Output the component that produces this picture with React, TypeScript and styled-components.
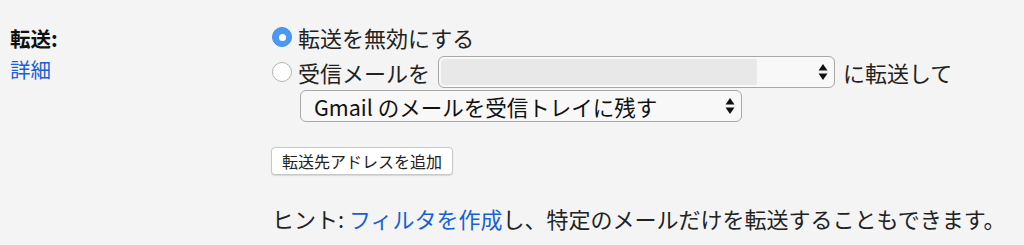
import React from 'react';
import styled, { createGlobalStyle } from 'styled-components';

const GlobalStyle = createGlobalStyle`
  html, body {
    margin: 0;
    padding: 0;
    background: #f4f4f4;
  }
  body {
    font-family: 'Noto Sans CJK JP', 'Liberation Sans', sans-serif;
    color: #222;
  }
`;

const Arrows: React.FC = () => (
  <svg width="10" height="18" viewBox="0 0 10 18">
    <path d="M5 1 L9.5 7.5 L0.5 7.5 Z" fill="#111" />
    <path d="M5 17 L9.5 10.5 L0.5 10.5 Z" fill="#111" />
  </svg>
);

const App: React.FC = () => {
  return (
    <>
      <GlobalStyle />
      <Page>
        <LabelColumn>
          <Title>転送:</Title>
          <Link href="#">詳細</Link>
        </LabelColumn>
        <Content>
          <RadioRow>
            <Radio checked />
            <Text>転送を無効にする</Text>
          </RadioRow>
          <RadioRow>
            <Radio />
            <Text>受信メールを</Text>
            <Select width={397}>
              <Masked />
              <ArrowBox>
                <Arrows />
              </ArrowBox>
            </Select>
            <Text>に転送して</Text>
          </RadioRow>
          <Indented>
            <Select width={442}>
              <SelectLabel>Gmail のメールを受信トレイに残す</SelectLabel>
              <ArrowBox>
                <Arrows />
              </ArrowBox>
            </Select>
          </Indented>
          <Button type="button">転送先アドレスを追加</Button>
          <Hint>
            ヒント: <Link href="#">フィルタを作成</Link>し、特定のメールだけを転送することもできます。
          </Hint>
        </Content>
      </Page>
    </>
  );
};

export default App;

const Page = styled.div`
  display: flex;
  padding: 24px 0 0 10px;
  height: 245px;
  box-sizing: border-box;
`;

const LabelColumn = styled.div`
  width: 262px;
  display: flex;
  flex-direction: column;
  gap: 3px;
  font-size: 20.5px;
  line-height: 28px;
`;

const Title = styled.div`
  font-weight: bold;
  color: #111;
`;

const Link = styled.a`
  color: #1a5fd6;
  text-decoration: none;
`;

const Content = styled.div`
  display: flex;
  flex-direction: column;
  align-items: flex-start;
  font-size: 22px;
`;

const RadioRow = styled.div`
  display: flex;
  align-items: center;
  height: 34px;
  gap: 8px;
  margin-top: 1px;
  &:first-child {
    height: 26px;
    margin: 0 0 4px;
  }
`;

const Radio = styled.span<{ checked?: boolean }>`
  width: 20px;
  height: 20px;
  border-radius: 50%;
  box-sizing: border-box;
  flex-shrink: 0;
  margin-right: -2px;
  position: relative;
  background: ${(p) => (p.checked ? '#4a98f4' : '#fff')};
  border: 1px solid ${(p) => (p.checked ? '#3d8ef0' : '#b3b3b3')};
  &::after {
    content: '';
    display: ${(p) => (p.checked ? 'block' : 'none')};
    position: absolute;
    left: 50%;
    top: 50%;
    width: 7px;
    height: 7px;
    margin: -3.5px 0 0 -3.5px;
    border-radius: 50%;
    background: #fff;
  }
`;

const Text = styled.span`
  line-height: 26px;
  color: #222;
  white-space: nowrap;
`;

const Select = styled.div<{ width: number }>`
  width: ${(p) => p.width}px;
  height: 32px;
  box-sizing: border-box;
  border: 1px solid #a8a8a8;
  border-radius: 6px;
  background: #f8f8f8;
  display: flex;
  align-items: center;
  padding: 2px 6px 2px 2px;
  gap: 8px;
`;

const Masked = styled.div`
  width: 316px;
  align-self: stretch;
  background: #e8e8e8;
  border-radius: 4px 0 0 4px;
`;

const SelectLabel = styled.span`
  flex: 1;
  padding-left: 11px;
  font-size: 21.5px;
  color: #111;
  white-space: nowrap;
`;

const ArrowBox = styled.span`
  margin-left: auto;
  display: flex;
  align-items: center;
`;

const Indented = styled.div`
  padding-left: 28px;
  margin-top: 1px;
`;

const Button = styled.button`
  margin-top: 25px;
  margin-left: -1px;
  height: 28px;
  padding: 0 10px;
  font-family: inherit;
  font-size: 16px;
  color: #222;
  background: #fff;
  border: 1px solid #c8c8c8;
  border-radius: 4px;
  box-shadow: 0 1px 1px rgba(0, 0, 0, 0.12);
`;

const Hint = styled.div`
  margin-top: 28px;
  line-height: 30px;
  color: #222;
  white-space: nowrap;
`;
